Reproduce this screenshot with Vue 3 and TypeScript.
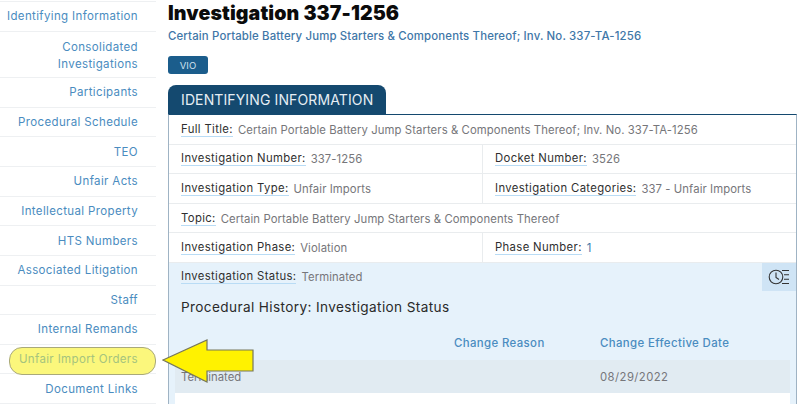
<script setup lang="ts">
const nav: { label: string; lines?: string[]; mark?: boolean }[] = [
  { label: 'Identifying Information' },
  { label: 'Consolidated Investigations', lines: ['Consolidated', 'Investigations'] },
  { label: 'Participants' },
  { label: 'Procedural Schedule' },
  { label: 'TEO' },
  { label: 'Unfair Acts' },
  { label: 'Intellectual Property' },
  { label: 'HTS Numbers' },
  { label: 'Associated Litigation' },
  { label: 'Staff' },
  { label: 'Internal Remands' },
  { label: 'Unfair Import Orders', mark: true },
  { label: 'Document Links' },
]
const title = 'Certain Portable Battery Jump Starters & Components Thereof'
</script>

<template>
  <div class="page">
    <nav class="side">
      <div v-for="n in nav" :key="n.label" class="nav-item" :class="{ two: n.lines, mark: n.mark }">
        <template v-if="n.lines"><span v-for="l in n.lines" :key="l" class="line">{{ l }}</span></template>
        <span v-else-if="n.mark" class="pill">{{ n.label }}</span>
        <template v-else>{{ n.label }}</template>
      </div>
    </nav>
    <main class="main">
      <h1>Investigation 337-1256</h1>
      <p class="sub">{{ title }}; Inv. No. 337-TA-1256</p>
      <span class="badge">VIO</span>
      <div class="tab">IDENTIFYING INFORMATION</div>
      <section class="panel">
        <div class="row"><div class="cell"><span class="k">Full Title:</span><span class="v">{{ title }}; Inv. No. 337-TA-1256</span></div></div>
        <div class="row">
          <div class="cell left"><span class="k">Investigation Number:</span><span class="v">337-1256</span></div>
          <div class="cell"><span class="k">Docket Number:</span><span class="v">3526</span></div>
        </div>
        <div class="row">
          <div class="cell left"><span class="k">Investigation Type:</span><span class="v">Unfair Imports</span></div>
          <div class="cell"><span class="k">Investigation Categories:</span><span class="v">337 - Unfair Imports</span></div>
        </div>
        <div class="row"><div class="cell"><span class="k">Topic:</span><span class="v">{{ title }}</span></div></div>
        <div class="row">
          <div class="cell left"><span class="k">Investigation Phase:</span><span class="v">Violation</span></div>
          <div class="cell"><span class="k">Phase Number:</span><span class="v num">1</span></div>
        </div>
        <div class="status">
          <div class="status-head">
            <div class="cell"><span class="k">Investigation Status:</span><span class="v">Terminated</span></div>
            <button class="hist" aria-label="History">
              <svg width="22" height="18" viewBox="0 0 22 18" fill="none" stroke="#333" stroke-width="1.1">
                <circle cx="8" cy="9" r="6.8" />
                <path d="M8 4.5V9.5L11 11.5" />
                <path d="M14 2.5H21M16 6.8H21M16 11.2H21M14 15.5H21" />
              </svg>
            </button>
          </div>
          <h2>Procedural History: Investigation Status</h2>
          <div class="thead"><span class="c2">Change Reason</span><span class="c3">Change Effective Date</span></div>
          <div class="tr"><span class="c1">Terminated</span><span class="c3 date">08/29/2022</span></div>
          <div class="tr-white"></div>
        </div>
      </section>
    </main>
    <svg class="arrow" width="94" height="46" viewBox="0 0 94 46">
      <path d="M1 21L45 1V11H91V32H45V43Z" fill="#fff200" stroke="#77775a" stroke-width="1.2" />
    </svg>
  </div>
</template>

<style>
html, body { margin: 0; background: #fff; }
</style>

<style scoped>
.page {
  position: relative;
  display: flex;
  width: 800px;
  height: 404px;
  overflow: hidden;
  background: #fff;
  font-family: Inter, "Open Sans", sans-serif;
  font-size: 11.3px;
  color: #333;
}
.side {
  width: 156px;
  flex: none;
  margin-top: 1px;
  border-top: 1px solid #eef0f2;
}
.nav-item {
  box-sizing: border-box;
  height: 29.65px;
  padding-right: 18px;
  display: flex;
  align-items: center;
  justify-content: flex-end;
  color: #4a8cc0;
  font-size: 11.5px;
  letter-spacing: 0.36px;
  white-space: nowrap;
  border-bottom: 1px solid #eef0f2;
}
.nav-item.two {
  height: 46.4px;
  padding-bottom: 4px;
  flex-direction: column;
  align-items: flex-end;
  line-height: 17px;
}
.nav-item.mark { padding-right: 0; align-items: flex-start; }
.pill {
  box-sizing: border-box;
  width: 147px;
  height: 28px;
  margin-top: 2.5px;
  padding-right: 17px;
  padding-bottom: 4px;
  display: flex;
  align-items: center;
  justify-content: flex-end;
  background: #fbf77c;
  border: 1px solid #a9a97a;
  border-radius: 13px;
  color: #a5c47e;
}
.main {
  flex: 1;
  min-width: 0;
  margin-left: 12px;
  margin-right: 3px;
  padding-top: 1px;
}
h1 {
  margin: 0;
  font-size: 19.6px;
  line-height: 24px;
  font-weight: 900;
  color: #0b0b0b;
  letter-spacing: 0.1px;
}
.sub {
  margin: 4px 0 0;
  font-size: 11.4px;
  line-height: 15px;
  font-weight: 500;
  color: #3f77a8;
  letter-spacing: 0.15px;
}
.badge {
  display: flex;
  align-items: center;
  justify-content: center;
  box-sizing: border-box;
  width: 40px;
  height: 18px;
  margin-top: 12px;
  background: #1b5d8c;
  border-radius: 3px;
  color: #cfe0ec;
  font-size: 9.5px;
}
.tab {
  box-sizing: border-box;
  width: 218px;
  height: 29px;
  margin-top: 11px;
  padding-left: 13px;
  display: flex;
  align-items: center;
  background: #14496f;
  border-radius: 8px 8px 0 0;
  color: #e6eef4;
  font-size: 14px;
  letter-spacing: 0.12px;
  white-space: nowrap;
}
.panel {
  box-sizing: border-box;
  border: 1px solid #9fb3c4;
  border-top-color: #14496f;
  border-bottom: 0;
  height: 290px;
}
.row {
  display: flex;
  height: 29.6px;
  box-sizing: border-box;
  border-bottom: 1px solid #e9ecee;
}
.cell {
  flex: 1;
  display: flex;
  align-items: center;
  padding-left: 12px;
  padding-top: 1px;
  white-space: nowrap;
}
.cell.left {
  flex: none;
  width: 314px;
  box-sizing: border-box;
  border-right: 1px solid #e9ecee;
}
.k {
  color: #2f2f2f;
  border-bottom: 1px solid #b9dcf5;
  line-height: 13px;
  margin-right: 5px;
  letter-spacing: 0.36px;
}
.v { color: #76767a; letter-spacing: 0.09px; }
.num { color: #3f77a8; }
.status {
  background: #e6f2fb;
  height: 160px;
  padding: 0 6px 0 0;
  display: flex;
  flex-direction: column;
}
.status-head {
  display: flex;
  height: 28px;
  margin-right: -6px;
}
.hist {
  width: 34px;
  height: 28px;
  border: 0;
  padding: 0;
  background: #cfe4f5;
  display: flex;
  align-items: center;
  justify-content: center;
}
h2 {
  margin: 4px 0 0 12px;
  font-size: 13.6px;
  line-height: 24px;
  font-weight: 400;
  color: #2a2a2a;
  letter-spacing: 0.38px;
}
.thead {
  display: flex;
  height: 29px;
  margin-top: 10px;
  margin-left: 6px;
  align-items: center;
  font-weight: 500;
  color: #4a8cc0;
  font-size: 11.4px;
  letter-spacing: 0.38px;
}
.c1 { width: 425px; flex: none; padding-left: 6px; box-sizing: border-box; }
.c2 { margin-left: 279px; width: 146px; flex: none; white-space: nowrap; }
.tr {
  display: flex;
  align-items: center;
  height: 33px;
  margin-top: 2px;
  margin-left: 6px;
  background: #e1ebf2;
  color: #76767a;
  padding-top: 1px;
  box-sizing: border-box;
}
.tr-white { height: 12px; margin-left: 6px; background: #fff; }
.date { letter-spacing: 0.45px; }
.arrow {
  position: absolute;
  left: 162px;
  top: 339px;
}
</style>
